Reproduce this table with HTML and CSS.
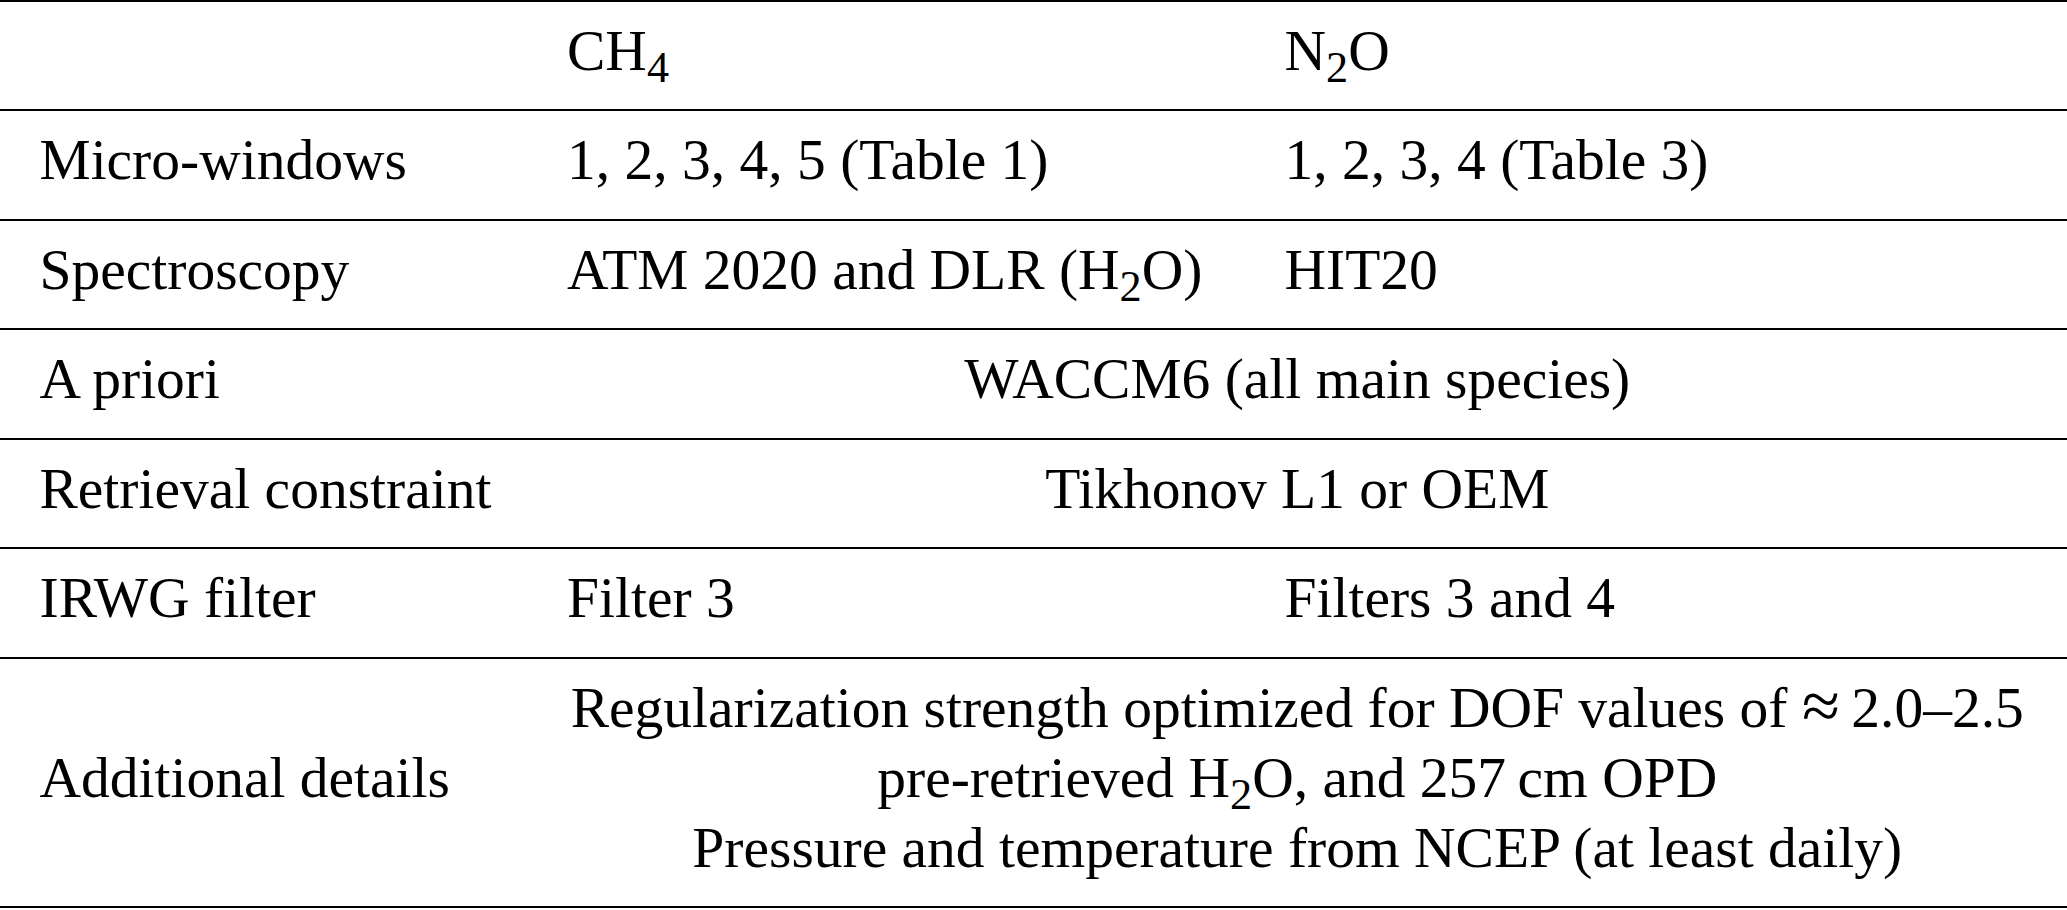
FILE: index.html
```html
<!DOCTYPE html>
<html lang="en">
<head>
<meta charset="utf-8">
<title>Retrieval settings</title>
<link rel="stylesheet" href="styles.css">
</head>
<body>
<table class="settings">
  <colgroup>
    <col class="col-label">
    <col class="col-ch4">
    <col class="col-n2o">
  </colgroup>
  <thead>
    <tr>
      <th></th>
      <th>CH<span class="sub">4</span></th>
      <th>N<span class="sub">2</span>O</th>
    </tr>
  </thead>
  <tbody>
    <tr>
      <td>Micro-windows</td>
      <td>1, 2, 3, 4, 5 (Table 1)</td>
      <td>1, 2, 3, 4 (Table 3)</td>
    </tr>
    <tr>
      <td>Spectroscopy</td>
      <td>ATM 2020 and DLR (H<span class="sub">2</span>O)</td>
      <td>HIT20</td>
    </tr>
    <tr>
      <td>A priori</td>
      <td class="span" colspan="2">WACCM6 (all main species)</td>
    </tr>
    <tr>
      <td>Retrieval constraint</td>
      <td class="span" colspan="2">Tikhonov L1 or OEM</td>
    </tr>
    <tr>
      <td>IRWG filter</td>
      <td>Filter 3</td>
      <td>Filters 3 and 4</td>
    </tr>
    <tr>
      <td class="mid">Additional details</td>
      <td class="span" colspan="2">Regularization strength optimized for DOF values of <span class="approx">&#8776;</span>&#8201;2.0&#8211;2.5<br>pre-retrieved H<span class="sub">2</span>O, and 257&#8201;cm OPD<br>Pressure and temperature from NCEP (at least daily)</td>
    </tr>
  </tbody>
</table>
</body>
</html>
```
FILE: styles.css
```css
html, body {
  margin: 0;
  padding: 0;
  background: #ffffff;
}

body {
  font-family: "Liberation Serif", "Times New Roman", serif;
  color: #000000;
}

.settings {
  width: 2067px;
  table-layout: fixed;
  border-collapse: collapse;
  border-top: 2px solid #000000;
}

.col-label { width: 527.5px; }
.col-ch4 { width: 717.5px; }
.col-n2o { width: 822px; }

.settings th,
.settings td {
  font-size: 57.5px;
  font-weight: normal;
  line-height: 70px;
  text-align: left;
  vertical-align: top;
  padding: 13.9px 39.5px 23.6px 39.5px;
  border-bottom: 2px solid #000000;
  white-space: nowrap;
}

.settings td.span {
  text-align: center;
}

.settings td.mid {
  vertical-align: middle;
}

.sub {
  font-size: 0.77em;
  line-height: 0;
  vertical-align: -11.5px;
}

.approx {
  font-size: 1.2em;
  line-height: 0;
  vertical-align: -2px;
}
```
